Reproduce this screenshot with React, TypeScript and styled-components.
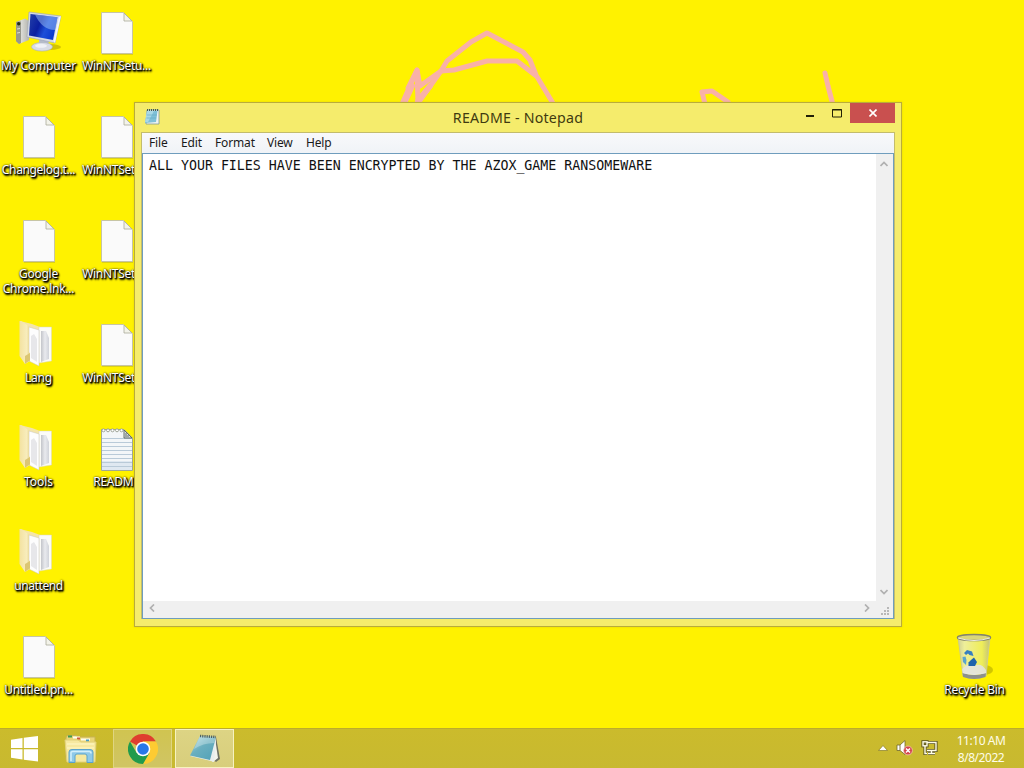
import React from "react";
import styled, { createGlobalStyle } from "styled-components";

const GlobalStyle = createGlobalStyle`
  * {
    box-sizing: border-box;
  }

  body {
    margin: 0;
    overflow: hidden;
    font-family: "Noto Sans", "Open Sans", sans-serif;
    font-size: 12px;
  }
`;

type IconKind = "computer" | "file" | "folder" | "text" | "bin";

interface Shortcut {
  name: string;
  kind: IconKind;
  spacing?: number;
}

const firstColumn: Shortcut[] = [
  { name: "My Computer", kind: "computer", spacing: -0.2 },
  { name: "Changelog.t...", kind: "file", spacing: -0.35 },
  { name: "Google Chrome.lnk...", kind: "file", spacing: -0.25 },
  { name: "Lang", kind: "folder", spacing: -0.2 },
  { name: "Tools", kind: "folder" },
  { name: "unattend", kind: "folder", spacing: -0.4 },
  { name: "Untitled.pn...", kind: "file", spacing: -0.3 },
];

const secondColumn: Shortcut[] = [
  { name: "WinNTSetu...", kind: "file", spacing: -0.3 },
  { name: "WinNTSetu...", kind: "file", spacing: -0.3 },
  { name: "WinNTSetu...", kind: "file", spacing: -0.3 },
  { name: "WinNTSetu...", kind: "file", spacing: -0.3 },
  { name: "README", kind: "text", spacing: -0.25 },
];

const Screen = styled.div`
  position: relative;
  display: flex;
  flex-direction: column;
  width: 1024px;
  height: 768px;
  overflow: hidden;
  background: #fff200;
`;

const Desktop = styled.main`
  display: flex;
  flex: 1;
  min-height: 0;
`;

const IconColumn = styled.div`
  display: flex;
  flex-direction: column;
  width: 78px;
`;

const BinColumn = styled(IconColumn)`
  justify-content: flex-end;
  margin-left: auto;
  margin-right: 10px;
`;

const IconCell = styled.div`
  display: flex;
  flex-direction: column;
  align-items: center;
  height: 104px;
  padding-top: 9px;
`;

const IconLabel = styled.span<{ $spacing: number }>`
  width: 78px;
  margin-top: 1px;
  padding-right: 1px;
  color: #fff;
  font-size: 12px;
  line-height: 15px;
  letter-spacing: ${(props) => props.$spacing}px;
  text-align: center;
  text-shadow: 1px 1px 1px #000, 1px 1px 2px #000, 1px 2px 2px #000,
    0 0 2px rgba(0, 0, 0, 0.9);
`;

const Scribble = styled.svg`
  position: absolute;
  top: 0;
  left: 0;
  pointer-events: none;
`;

const Window = styled.section`
  position: absolute;
  top: 102px;
  left: 134px;
  display: flex;
  flex-direction: column;
  width: 768px;
  height: 525px;
  padding: 0 6px 7px;
  border: 1px solid #b9ac3b;
  background: #f5ec6c;
  box-shadow: 0 0 2px rgba(140, 130, 20, 0.25);
`;

const TitleBar = styled.header`
  display: grid;
  grid-template-columns: 102px 1fr 102px;
  height: 29px;
`;

const TitleIcon = styled.div`
  padding: 5px 0 0 2px;
`;

const Title = styled.h1`
  margin: 0;
  color: #3f3a10;
  font-size: 14.2px;
  font-weight: 400;
  line-height: 29px;
  letter-spacing: 0.22px;
  text-align: center;
`;

const WindowButtons = styled.div`
  display: flex;
  justify-content: flex-end;
`;

const WindowButton = styled.div<{ $close?: boolean }>`
  display: flex;
  flex-shrink: 0;
  align-items: center;
  justify-content: center;
  width: ${(props) => (props.$close ? 45 : 27)}px;
  height: 20px;
  background: ${(props) => (props.$close ? "#c9504f" : "transparent")};
`;

const Client = styled.div`
  display: flex;
  flex: 1;
  flex-direction: column;
  border: 1px solid #c3bc6c;
  border-bottom: 0;
  background: #fff;
`;

const MenuBar = styled.nav`
  display: flex;
  height: 20px;
  padding-left: 7px;
  background: linear-gradient(#f8f9fb, #f0f3f7);
`;

const MenuItem = styled.span<{ $width: number }>`
  width: ${(props) => props.$width}px;
  color: #1a1a1a;
  font-size: 12px;
  line-height: 20px;
  letter-spacing: -0.15px;
  white-space: nowrap;
`;

const Editor = styled.div`
  display: grid;
  flex: 1;
  grid-template-columns: 1fr 17px;
  grid-template-rows: 1fr 17px;
  border: 1px solid #6f9dbd;
`;

const EditorText = styled.div`
  padding: 3px 0 0 6px;
  color: #111;
  font-family: "DejaVu Sans Mono", monospace;
  font-size: 13.28px;
  line-height: 17px;
  white-space: pre;
`;

const ScrollTrack = styled.div<{ $vertical?: boolean }>`
  display: flex;
  flex-direction: ${(props) => (props.$vertical ? "column" : "row")};
  align-items: center;
  justify-content: space-between;
  padding: ${(props) => (props.$vertical ? "6px 2px 5px 0" : "0 5px 3px 5px")};
  background: #f0f0f0;
`;

const Grip = styled.div`
  display: flex;
  align-items: flex-end;
  justify-content: flex-end;
  padding: 0 4px 3px 0;
  background: #f0f0f0;
`;

const TaskBar = styled.footer`
  display: flex;
  height: 40px;
  background: linear-gradient(#cbbb2c, #c8b930);
  border-top: 1px solid #bcac2c;
`;

const TaskButton = styled.div<{ $width: number; $state?: "open" | "active" }>`
  display: flex;
  align-items: center;
  justify-content: center;
  width: ${(props) => props.$width}px;
  height: 39px;
  margin-right: ${(props) => (props.$state === "open" ? 3 : 0)}px;
  border: ${(props) => (props.$state ? "1px solid" : "0")};
  border-color: ${(props) => (props.$state === "active" ? "#f6f2c0" : "#dfd581")};
  background: ${(props) =>
    props.$state === "active"
      ? "linear-gradient(#ddd484, #d8ce7c)"
      : props.$state === "open"
        ? "linear-gradient(#d0c450, #d0c564)"
        : "transparent"};
`;

const Tray = styled.div`
  display: flex;
  align-items: flex-start;
  margin-left: auto;
`;

const TrayIcons = styled.div`
  display: flex;
  align-items: center;
  gap: 8px;
  padding-top: 11px;
`;

const Clock = styled.div`
  width: 86px;
  padding-top: 4px;
  color: #fffde8;
  font-size: 12px;
  line-height: 16.5px;
  letter-spacing: -0.45px;
  text-align: center;
`;

const ComputerIcon = () => (
  <svg width="48" height="48" viewBox="0 0 48 48">
    <defs>
      <linearGradient id="screen" x1="0" y1="0" x2="1" y2="0.4">
        <stop offset="0" stopColor="#2440a8" />
        <stop offset="0.45" stopColor="#0a1fa0" />
        <stop offset="0.7" stopColor="#1d4fd8" />
        <stop offset="1" stopColor="#0d3bcd" />
      </linearGradient>
      <linearGradient id="tower">
        <stop offset="0" stopColor="#a3a39c" />
        <stop offset="0.4" stopColor="#dcdcd6" />
        <stop offset="1" stopColor="#b4b4ae" />
      </linearGradient>
    </defs>
    <ellipse cx="35" cy="38" rx="11" ry="3" fill="#b5a300" opacity="0.6" />
    <path d="M1 13 L10 9.5 L14 12 L14 31 L4 35 L1 32Z" fill="url(#tower)" />
    <path d="M1 13 L6 12.5 V34 L4 35 L1 32Z" fill="#98988c" />
    <path d="M2 20 L5 19.5 M2 24 L5 23.5" stroke="#dcdccf" />
    <circle cx="3.7" cy="14.8" r="1.7" fill="#243018" />
    <path d="M24 29 L34 31 L33 38 L24 37Z" fill="#b4bbca" />
    <ellipse cx="27" cy="37.8" rx="10.5" ry="4.3" fill="#d9dce5" stroke="#aab0be" strokeWidth="0.6" />
    <ellipse cx="26" cy="36.8" rx="6" ry="2" fill="#eff1f5" />
    <path d="M14 3 L46 7 L40 34 L12 28Z" fill="#d5dae4" stroke="#9ba3b3" strokeWidth="0.6" />
    <path d="M15.5 5 L42.5 8.3 L38 31 L14 26.5Z" fill="url(#screen)" />
    <path d="M20 5.6 L42.5 8.3 L40 21 Q27 21 20 5.6Z" fill="#9dc3fa" opacity="0.5" />
    <path d="M44 8 L46 7 L40 34 L38.5 32Z" fill="#f3f5fa" />
  </svg>
);

const FileIcon = () => (
  <svg width="48" height="48" viewBox="0 0 48 48">
    <path d="M9 4.5 H31 L40 13 V45.5 H9Z" fill="#918b45" opacity="0.65" />
    <path d="M8.5 3.5 H30.5 L39.5 12.5 V44.5 H8.5Z" fill="#fafafa" stroke="#c7c5a4" />
    <path d="M31 4 V12 H39Z" fill="#f3f3e9" stroke="#aaa99b" strokeWidth="0.8" />
  </svg>
);

const TextFileIcon = () => (
  <svg width="48" height="48" viewBox="0 0 48 48">
    <path d="M8.5 4.5 H31 L39.5 13 V45.5 H8.5Z" fill="#f3f6f8" stroke="#a1a891" />
    <path d="M9 36 H39 V45 H9Z" fill="#dfe8f1" />
    {[13, 17, 21, 25, 29, 33, 37, 41].map((y) => (
      <path key={y} d={`M9 ${y}.5 H39`} stroke="#b9cad8" />
    ))}
    {[10.5, 15, 19.5, 24, 28.5].map((x) => (
      <circle key={x} cx={x} cy="5.3" r="1.5" fill="#fff" stroke="#8d9384" strokeWidth="0.8" />
    ))}
    <path d="M31 5 V13 H39Z" fill="#d8dfdf" stroke="#59635e" strokeWidth="0.9" />
    <path d="M33 8 V12 M35 10 V12" stroke="#68716e" />
  </svg>
);

const FolderIcon = () => (
  <svg width="48" height="48" viewBox="0 0 48 48">
    <defs>
      <linearGradient id="folder">
        <stop offset="0" stopColor="#f3e2a0" />
        <stop offset="0.7" stopColor="#f8edbd" />
        <stop offset="1" stopColor="#e3ce80" />
      </linearGradient>
      <linearGradient id="pages">
        <stop offset="0" stopColor="#c3c5ca" />
        <stop offset="0.5" stopColor="#e9eaee" />
        <stop offset="1" stopColor="#d0d3da" />
      </linearGradient>
    </defs>
    <path d="M5 0 L17 3 L25 6 V30 L5 36Z" fill="#f4e5a8" />
    <path d="M24 6 L36.5 6 V40 L24 42Z" fill="#fbfbf8" stroke="#dbd7bf" strokeWidth="0.5" />
    <path d="M26 10 L31 10 L34 17 V38 L26 41Z" fill="url(#pages)" />
    <path d="M14 6 L24 9 V45 L14 40Z" fill="#fdfdfd" stroke="#c8c6be" strokeWidth="0.5" />
    <path d="M16 15 L19 13 L22 18 V41 L16 37Z" fill="#e7e7ea" />
    <path d="M4.5 -1 L13.5 5 V30 L15 33 V40 L10 43 L4.5 35Z" fill="url(#folder)" />
    <path d="M10 35 L15 32 V39 L10 43Z" fill="#dcc673" />
  </svg>
);

const BinIcon = () => (
  <svg width="48" height="48" viewBox="0 0 48 48">
    <defs>
      <linearGradient id="glass">
        <stop offset="0" stopColor="#cfcf95" />
        <stop offset="0.2" stopColor="#eeee9a" />
        <stop offset="0.75" stopColor="#efee58" />
        <stop offset="1" stopColor="#c2c17b" />
      </linearGradient>
    </defs>
    <ellipse cx="33" cy="37" rx="9" ry="5" fill="#a69b00" opacity="0.5" />
    <path d="M7 4 L39 4 L35 43 Q23 48 12 43Z" fill="url(#glass)" stroke="#cfce8b" />
    <path d="M11 36 Q19 29 23 33 Q30 29 35 37 V41 H12Z" fill="#e3e3e0" opacity="0.9" />
    <path d="M11.5 40 Q23 44 35 40 L34.5 44 Q23 48 12 44Z" fill="#8d908d" />
    <path d="M12 39.5 Q23 43 35 39.5" fill="none" stroke="#e5e6df" strokeWidth="1.3" />
    <ellipse cx="23" cy="4.5" rx="16.5" ry="3" fill="#dad77a" stroke="#83846c" strokeWidth="1.5" />
    <path d="M7 5 Q23 10 39 5" fill="none" stroke="#eeede0" strokeWidth="1" />
    <path d="M13 20 L16 17 L21 18.5 L22.5 23 L18.5 22 L17 20.5 L15 22Z" fill="#367fc0" />
    <path d="M11.5 24 L14.5 23.5 L15.5 27 L15 32 L12 29Z" fill="#5aa5ce" />
    <path d="M20 27 L23 24.5 L26 29 L24 33 H17.5 L17.5 29.5Z" fill="#1e63ac" />
  </svg>
);

const icons: Record<IconKind, React.FC> = {
  computer: ComputerIcon,
  file: FileIcon,
  folder: FolderIcon,
  text: TextFileIcon,
  bin: BinIcon,
};

const DesktopIcon = ({ name, kind, spacing = 0 }: Shortcut) => {
  const Icon = icons[kind];

  return (
    <IconCell>
      <Icon />
      <IconLabel $spacing={spacing}>{name}</IconLabel>
    </IconCell>
  );
};

const NotepadIcon = () => (
  <svg width="32" height="30" viewBox="0 0 32 30">
    <defs>
      <linearGradient id="cover" x1="0" y1="0" x2="0.8" y2="1">
        <stop offset="0" stopColor="#b9dfe6" />
        <stop offset="0.5" stopColor="#6aafbf" />
        <stop offset="1" stopColor="#55a3b8" />
      </linearGradient>
    </defs>
    <path d="M27 3 L31 25 L27 28 L22 24Z" fill="#6f7163" />
    <path d="M26 4 L29 24 L24 28 L20 25Z" fill="#f3f4ed" />
    <path d="M1 22 L22 27 L25 28 L27 8 L26 3Z" fill="#e9eeee" />
    <path d="M11 2 L27 3 L21 26 L1 21.5Z" fill="url(#cover)" />
    <path d="M11 2 L27 3 L25 9 Q14 9 5 15Z" fill="#e4f3f3" opacity="0.35" />
    <path d="M11 2 L27 3" stroke="#4d5f62" strokeWidth="2.6" strokeDasharray="1.2 1" />
  </svg>
);

const SmallNotepadIcon = () => (
  <svg width="18" height="18" viewBox="0 0 18 18">
    <path d="M4 2 H16 V16 H3Z" fill="#eef4f2" stroke="#7e9a94" strokeWidth="0.8" />
    <path d="M4 3 H14.5 L13 14 L2 15Z" fill="#7fc0d8" />
    <path d="M4 3 H11 L5 14 H2Z" fill="#a9d8e6" />
    <path d="M4 7 H14 M3.5 10 H13" stroke="#62a9c5" strokeWidth="0.6" />
    <path d="M4 2 H16" stroke="#405a58" strokeWidth="2" strokeDasharray="1 1" />
  </svg>
);

const StartIcon = () => (
  <svg width="28" height="26" viewBox="0 0 28 26">
    <path d="M0 3.7 L11.5 2 V12 H0Z M12.8 1.8 L27 0 V12 H12.8Z M0 13.2 H11.5 V23.5 L0 21.8Z M12.8 13.2 H27 V25.5 L12.8 23.7Z" fill="#fff" />
  </svg>
);

const ExplorerIcon = () => (
  <svg width="34" height="30" viewBox="0 0 34 30">
    <path d="M2 4 Q2 1.5 4 1.5 H12 L14 3 H31 V26 H2Z" fill="#ead678" stroke="#c7b357" />
    <path d="M4 2.5 H8" stroke="#3f9a50" strokeWidth="2" />
    <path d="M9 3.5 H16" stroke="#fffdf0" strokeWidth="2" />
    <path d="M13 4.5 H16" stroke="#ce5639" strokeWidth="2" />
    <path d="M17 5.5 H26" stroke="#fffdf0" strokeWidth="2" />
    <path d="M22 6.5 H25" stroke="#4b9cbd" strokeWidth="2" />
    <path d="M1 6 H14 L17 8 H32 L31 28 H3Z" fill="#f7e9a0" stroke="#e2d27c" />
    <path d="M3 10 H30 M3 14 H30" stroke="#fff8c8" />
    <path d="M5 28.5 V18 Q5 15.5 8 15.5 H26 Q29 15.5 29 18 V28.5 H23 V22 Q23 20 21 20 H13 Q11 20 11 22 V28.5Z" fill="#8fc9e8" stroke="#5aa3cc" />
    <path d="M7 27 V18.5 Q7 17.5 9 17.5 H25 Q27 17.5 27 19.5" fill="none" stroke="#d4effa" strokeWidth="1.5" />
  </svg>
);

const ChromeIcon = () => (
  <svg width="30" height="30" viewBox="0 0 30 30">
    <path d="M15 15 L2 7.5 A15 15 0 0 1 28 7.5 H15Z" fill="#df3e2f" />
    <path d="M15 7.5 H28 A15 15 0 0 1 15 30 L21.5 18.7Z" fill="#fdcb32" />
    <path d="M2 7.5 A15 15 0 0 0 15 30 L21.5 18.7 L15 21 L8.5 18.7Z" fill="#219b4c" />
    <circle cx="15" cy="15" r="7.3" fill="#fff" />
    <circle cx="15" cy="15" r="5.8" fill="#2878e8" />
  </svg>
);

const Chevron = ({ d }: { d: string }) => (
  <svg width="8" height="8" viewBox="0 0 8 8">
    <path d={d} fill="none" stroke="#b0b0b0" strokeWidth="1.7" />
  </svg>
);

const App = () => {
  return (
    <Screen>
      <GlobalStyle />
      <Scribble width="1024" height="110" viewBox="0 0 1024 110">
        <g fill="none" stroke="#f9b1a8" strokeWidth="5" strokeLinejoin="round" strokeLinecap="round">
          <path d="M402 104 L417 70 L418 103 L441 71 L447 61 L471 42 L487 33 L523 52 L530 60 L536 75 L554 105" />
          <path d="M408 88 L417 70 L420 86 L441 71 L454 70 L487 61 L517 61 L535 75" />
          <path d="M405 101 L412 86 M418 101 L430 86" strokeWidth="6" />
          <path d="M705 104 L702 92 L712 91 L728 102" />
          <path d="M825 73 L828 86 L833 105" />
        </g>
      </Scribble>

      <Desktop>
        <IconColumn>
          {firstColumn.map((item) => (
            <DesktopIcon key={item.name} {...item} />
          ))}
        </IconColumn>
        <IconColumn>
          {secondColumn.map((item, index) => (
            <DesktopIcon key={index} {...item} />
          ))}
        </IconColumn>
        <BinColumn>
          <DesktopIcon name="Recycle Bin" kind="bin" spacing={-0.25} />
        </BinColumn>
      </Desktop>

      <Window>
        <TitleBar>
          <TitleIcon>
            <SmallNotepadIcon />
          </TitleIcon>
          <Title>README - Notepad</Title>
          <WindowButtons>
            <WindowButton>
              <svg width="8" height="10">
                <path d="M0 8 H8" stroke="#222006" strokeWidth="2" />
              </svg>
            </WindowButton>
            <WindowButton>
              <svg width="10" height="9">
                <path d="M0.5 0.5 H9.5 V8 H0.5Z M0 1 H10" fill="none" stroke="#222006" />
              </svg>
            </WindowButton>
            <WindowButton $close>
              <svg width="8" height="8">
                <path d="M0.5 0.5 L7.5 7.5 M7.5 0.5 L0.5 7.5" stroke="#fff" strokeWidth="1.6" />
              </svg>
            </WindowButton>
          </WindowButtons>
        </TitleBar>
        <Client>
          <MenuBar>
            <MenuItem $width={32}>File</MenuItem>
            <MenuItem $width={34}>Edit</MenuItem>
            <MenuItem $width={52}>Format</MenuItem>
            <MenuItem $width={39}>View</MenuItem>
            <MenuItem $width={40}>Help</MenuItem>
          </MenuBar>
          <Editor>
            <EditorText>ALL YOUR FILES HAVE BEEN ENCRYPTED BY THE AZOX_GAME RANSOMEWARE</EditorText>
            <ScrollTrack $vertical>
              <Chevron d="M0.5 6 L4 2.5 L7.5 6" />
              <Chevron d="M0.5 2 L4 5.5 L7.5 2" />
            </ScrollTrack>
            <ScrollTrack>
              <Chevron d="M6 0.5 L2.5 4 L6 7.5" />
              <Chevron d="M2 0.5 L5.5 4 L2 7.5" />
            </ScrollTrack>
            <Grip>
              <svg width="8" height="8" fill="#b8b8b8">
                <path d="M6 0 h2 v2 h-2Z M3 3 h2 v2 h-2Z M6 3 h2 v2 h-2Z M0 6 h2 v2 h-2Z M3 6 h2 v2 h-2Z M6 6 h2 v2 h-2Z" />
              </svg>
            </Grip>
          </Editor>
        </Client>
      </Window>

      <TaskBar>
        <TaskButton $width={49}>
          <StartIcon />
        </TaskButton>
        <TaskButton $width={64}>
          <ExplorerIcon />
        </TaskButton>
        <TaskButton $width={59} $state="open">
          <ChromeIcon />
        </TaskButton>
        <TaskButton $width={59} $state="active">
          <NotepadIcon />
        </TaskButton>
        <Tray>
          <TrayIcons>
            <svg width="10" height="6" viewBox="0 0 10 6">
              <path d="M0.5 5.5 L5 0.5 L9.5 5.5Z" fill="#fff" stroke="#877b22" strokeWidth="0.7" />
            </svg>
            <svg width="17" height="16" viewBox="0 0 17 16">
              <path d="M1 5 H4 L9 0.5 V14.5 L4 10.5 H1Z" fill="#fff" stroke="#706829" strokeWidth="0.8" />
              <path d="M4 5 V10.5" stroke="#706829" strokeWidth="0.9" />
              <circle cx="12" cy="10.5" r="4.4" fill="#d3444b" stroke="#f5d0c0" strokeWidth="0.7" />
              <path d="M10 8.5 L14 12.5 M14 8.5 L10 12.5" stroke="#fff" strokeWidth="1.5" />
            </svg>
            <svg width="17" height="16" viewBox="0 0 17 16">
              <g fill="none" stroke="#5b5420" strokeWidth="3.2">
                <path d="M6 2.5 H15 V10.5 H6 M10.5 11 V13.5 M7 13.5 H14 M4 6 V13.5 H6" />
                <rect x="2" y="1.8" width="4" height="4" />
              </g>
              <g fill="none" stroke="#fffde8" strokeWidth="1.4">
                <path d="M6 2.5 H15 V10.5 H6 M10.5 11 V13.5 M7 13.5 H14 M4 6 V13.5 H6" />
                <rect x="2" y="1.8" width="4" height="4" />
              </g>
            </svg>
          </TrayIcons>
          <Clock>
            11:10 AM
            <br />
            8/8/2022
          </Clock>
        </Tray>
      </TaskBar>
    </Screen>
  );
};

export default App;
